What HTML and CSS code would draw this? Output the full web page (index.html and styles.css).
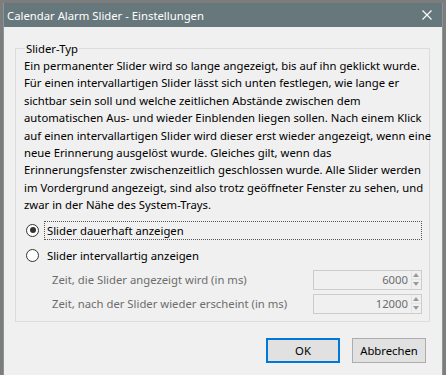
FILE: index.html
```
<!DOCTYPE html>
<html lang="de">
<head>
    <meta charset="UTF-8">
    <title>Calendar Alarm Slider - Einstellungen</title>
    <link rel="stylesheet" href="styles.css">
</head>
<body>
    <div class="window">
        <div class="titlebar">
            <span class="title">Calendar Alarm Slider - Einstellungen</span>
            <svg class="close" width="10" height="10" viewBox="0 0 10 10">
                <path d="M0.5 0.5 L9.5 9.5 M9.5 0.5 L0.5 9.5" stroke="#fff" stroke-width="1.1" fill="none"/>
            </svg>
        </div>
        <div class="content">
            <fieldset class="group">
                <legend>Slider-Typ</legend>
                <p class="desc">Ein permanenter Slider wird so lange angezeigt, bis auf ihn geklickt wurde.
                    Für einen intervallartigen Slider lässt sich unten festlegen, wie lange er
                    sichtbar sein soll und welche zeitlichen Abstände zwischen dem
                    automatischen Aus- und wieder Einblenden liegen sollen. Nach einem Klick
                    auf einen intervallartigen Slider wird dieser erst wieder angezeigt, wenn eine
                    neue Erinnerung ausgelöst wurde. Gleiches gilt, wenn das
                    Erinnerungsfenster zwischenzeitlich geschlossen wurde. Alle Slider werden
                    im Vordergrund angezeigt, sind also trotz geöffneter Fenster zu sehen, und
                    zwar in der Nähe des System-Trays.</p>

                <div class="radio-row">
                    <span class="radio checked"></span>
                    <span class="radio-label focused">Slider dauerhaft anzeigen</span>
                </div>
                <div class="radio-row">
                    <span class="radio"></span>
                    <span class="radio-label">Slider intervallartig anzeigen</span>
                </div>

                <div class="field">
                    <span class="field-label">Zeit, die Slider angezeigt wird (in ms)</span>
                    <div class="spin">
                        <span class="spin-value">6000</span>
                        <span class="spin-arrows"><i class="up"></i><i class="down"></i></span>
                    </div>
                </div>
                <div class="field">
                    <span class="field-label">Zeit, nach der Slider wieder erscheint (in ms)</span>
                    <div class="spin">
                        <span class="spin-value">12000</span>
                        <span class="spin-arrows"><i class="up"></i><i class="down"></i></span>
                    </div>
                </div>
            </fieldset>

            <div class="buttons">
                <button class="btn default">OK</button>
                <button class="btn">Abbrechen</button>
            </div>
        </div>
    </div>
</body>
</html>
```

FILE: styles.css
```
body {
    margin: 0;
    background: #7d7d7d;
    font-family: 'Noto Sans', sans-serif;
    font-size: 11.3px;
    color: #000;
    height: 375px;
    overflow: hidden;
}
.window {
    margin: 3px 0 0 3px;
    width: 440px;
    height: 372px;
    background: #f0f0f0;
    border-left: 1px solid #8a9598;
    border-right: 1px solid #8a9598;
    box-sizing: border-box;
}
.titlebar {
    height: 24px;
    background: #66787c;
    color: #fff;
    display: flex;
    align-items: center;
    justify-content: space-between;
    padding: 0 10px 0 3px;
}
.content {
    padding: 13px 12px 0 11px;
}
.group {
    margin: 0;
    padding: 0 7px 5px 8px;
    border: 1px solid #dcdcdc;
}
.group legend {
    padding: 0 1px;
    margin-left: 1px;
    line-height: 17px;
}
.desc {
    margin: 0 -14px 0 0;
    line-height: 17.4px;
    white-space: pre-line;
}
.radio-row {
    display: flex;
    align-items: center;
    height: 25px;
}
.radio-row:first-of-type {
    margin-top: 4px;
}
.radio {
    width: 11px;
    height: 11px;
    border: 1px solid #333;
    border-radius: 50%;
    background: #fff;
    margin: 0 5px 0 2px;
    position: relative;
}
.radio.checked::after {
    content: '';
    position: absolute;
    left: 2.5px;
    top: 2.5px;
    width: 6px;
    height: 6px;
    border-radius: 50%;
    background: #333;
}
.radio-label {
    padding: 1px 2px;
    border: 1px dotted transparent;
    flex: 1;
}
.radio-label.focused {
    border-color: #555;
}
.field {
    display: flex;
    align-items: center;
    justify-content: space-between;
    height: 24px;
    padding-left: 28px;
}
.field-label {
    color: #6d6d6d;
}
.spin {
    width: 109px;
    height: 20px;
    box-sizing: border-box;
    border: 1px solid #ccc;
    display: flex;
    justify-content: flex-end;
    align-items: center;
    color: #6d6d6d;
}
.spin-value {
    padding-right: 3px;
}
.spin-arrows {
    width: 9px;
    height: 18px;
    display: flex;
    flex-direction: column;
    border-left: 1px solid #e3e3e3;
}
.spin-arrows i {
    flex: 1;
    position: relative;
}
.spin-arrows .up {
    border-bottom: 1px solid #e3e3e3;
}
.spin-arrows i::after {
    content: '';
    position: absolute;
    left: 1px;
    top: 2px;
    border-left: 3px solid transparent;
    border-right: 3px solid transparent;
}
.spin-arrows .up::after {
    border-bottom: 4px solid #9a9a9a;
}
.spin-arrows .down::after {
    border-top: 4px solid #9a9a9a;
}
.buttons {
    display: flex;
    justify-content: flex-end;
    gap: 12px;
    margin-top: 16px;
    padding-right: 4px;
}
.btn {
    width: 74px;
    height: 25px;
    font-family: inherit;
    font-size: 11.3px;
    background: #e1e1e1;
    border: 1px solid #adadad;
    color: #000;
    padding: 0;
}
.btn.default {
    border: 2px solid #0078d7;
}
```
